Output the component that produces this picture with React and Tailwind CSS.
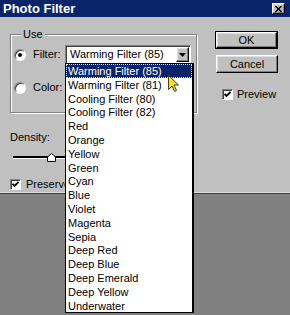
import React from 'react'

const filters = [
  'Warming Filter (85)',
  'Warming Filter (81)',
  'Cooling Filter (80)',
  'Cooling Filter (82)',
  'Red',
  'Orange',
  'Yellow',
  'Green',
  'Cyan',
  'Blue',
  'Violet',
  'Magenta',
  'Sepia',
  'Deep Red',
  'Deep Blue',
  'Deep Emerald',
  'Deep Yellow',
  'Underwater',
]

function Raised({ children, className = '' }) {
  return (
    <div
      className={`bg-[#c0c0c0] border border-t-white border-l-white border-r-black border-b-black shadow-[inset_-1px_-1px_0_#808080,inset_1px_1px_0_#dfdfdf] ${className}`}
    >
      {children}
    </div>
  )
}

function Radio({ checked }) {
  return (
    <span className="w-[12px] h-[12px] rounded-full bg-white border border-t-[#808080] border-l-[#808080] border-r-white border-b-white shadow-[inset_1px_1px_0_#404040] flex items-center justify-center shrink-0">
      {checked && <span className="w-[4px] h-[4px] rounded-full bg-black" />}
    </span>
  )
}

function Check() {
  return (
    <span className="w-[11px] h-[11px] bg-white border border-t-[#808080] border-l-[#808080] border-r-white border-b-white shadow-[inset_1px_1px_0_#404040] flex items-center justify-center shrink-0">
      <svg width="7" height="7" viewBox="0 0 7 7">
        <path d="M0.5 3 L2.5 5 L6.5 1" stroke="black" strokeWidth="1.8" fill="none" />
      </svg>
    </span>
  )
}

export default function App() {
  return (
    <div className="w-[290px] h-[315px] bg-[#808080] relative overflow-hidden font-['Liberation_Sans',Arial,sans-serif] text-[11px] text-black">
      {/* dialog */}
      <div className="h-[194px] bg-[#c0c0c0] border-b border-[#404040] shadow-[inset_0_-1px_0_#dfdfdf] flex flex-col">
        <div className="h-[17px] bg-[#0a246a] flex items-center justify-between pl-[3px] pr-[5px]">
          <span className="text-white font-bold text-[13px] leading-none">Photo Filter</span>
          <Raised className="w-[13px] h-[11px] flex items-center justify-center">
            <svg width="7" height="6" viewBox="0 0 7 6">
              <path d="M0.5 0 L6.5 6 M6.5 0 L0.5 6" stroke="black" strokeWidth="1.4" />
            </svg>
          </Raised>
        </div>

        <div className="flex items-start">
          {/* left side */}
          <div className="w-[197px] pl-[10px] pt-[11px]">
            <fieldset className="border border-[#808080] shadow-[inset_1px_1px_0_white,1px_1px_0_white] pl-[3px] pr-[5px] pb-[15px]">
              <legend className="ml-[7px] px-[2px] bg-[#c0c0c0] leading-[13px]">Use</legend>
              <div className="flex items-center h-[19px] mt-[4px]">
                <Radio checked />
                <span className="ml-[7px] w-[32px]">Filter:</span>
                <div className="w-[126px] h-[19px] bg-white border border-t-[#808080] border-l-[#808080] border-r-white border-b-white shadow-[inset_1px_1px_0_#404040] flex items-center justify-between pl-[4px] pr-[1px] overflow-hidden">
                  <span className="whitespace-nowrap">Warming Filter (85)</span>
                  <Raised className="w-[13px] h-[15px] shrink-0 flex items-center justify-center">
                    <svg width="7" height="4" viewBox="0 0 7 4">
                      <path d="M0 0 L7 0 L3.5 4 Z" fill="black" />
                    </svg>
                  </Raised>
                </div>
              </div>
              <div className="flex items-center h-[19px] mt-[14px]">
                <Radio />
                <span className="ml-[7px]">Color:</span>
              </div>
            </fieldset>

            <div className="mt-[18px] leading-[13px]">Density:</div>
            <div className="relative mt-[9px] h-[9px] pl-[3px] flex items-center">
              <div className="w-[70px] h-[3px] border-t-2 border-black border-b border-b-white" />
              <svg className="absolute left-[37px] top-0" width="9" height="9" viewBox="0 0 9 9">
                <path d="M0.5 8.5 L0.5 4 L4.5 0.5 L8.5 4 L8.5 8.5 Z" fill="white" stroke="black" />
              </svg>
            </div>
            <div className="flex items-center gap-[5px] mt-[14px]">
              <Check />
              <span className="whitespace-nowrap">Preserve Luminosity</span>
            </div>
          </div>

          {/* right side */}
          <div className="pl-[18px] pt-[14px] flex flex-col">
            <div className="border border-black">
              <Raised className="w-[61px] h-[16px] flex items-center justify-center">OK</Raised>
            </div>
            <Raised className="w-[62px] h-[18px] mt-[6px] ml-[1px] flex items-center justify-center">Cancel</Raised>
            <div className="flex items-center gap-[4px] mt-[13px] ml-[7px]">
              <Check />
              <span>Preview</span>
            </div>
          </div>
        </div>
      </div>

      {/* open dropdown list */}
      <div className="absolute left-[65px] top-[63px] w-[129px] bg-white border border-black border-r-2">
        {filters.map((f, i) => (
          <div
            key={f}
            className={`h-[13.8px] leading-[12px] pl-[1px] border whitespace-nowrap ${
              i === 0 ? 'bg-[#0a246a] text-white border-dotted border-[#e8e890]' : 'border-transparent'
            }`}
          >
            {f}
          </div>
        ))}
      </div>

      {/* mouse cursor */}
      <svg className="absolute left-[168px] top-[75px]" width="12" height="18" viewBox="0 0 12 18">
        <path d="M0.5 0.5 L0.5 14.5 L4 11 L6.5 16.5 L8.5 15.5 L6 10 L10.5 10 Z" fill="#f0e030" stroke="#4a4010" strokeWidth="1" />
      </svg>
    </div>
  )
}
